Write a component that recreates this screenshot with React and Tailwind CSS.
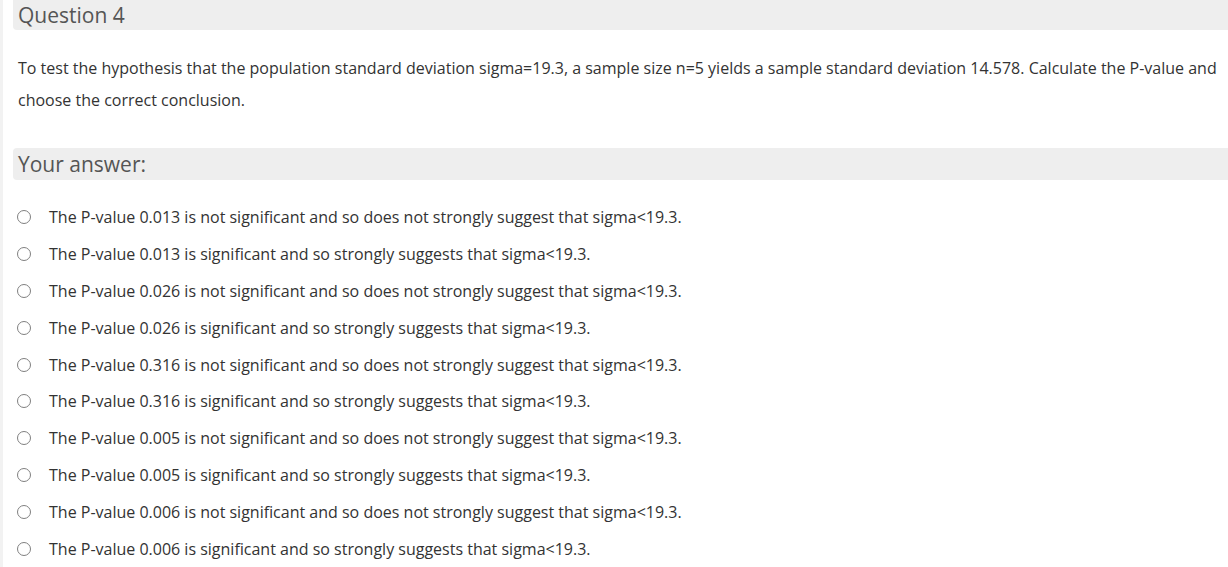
import React from 'react';

const options = [
    'The P-value 0.013 is not significant and so does not strongly suggest that sigma<19.3.',
    'The P-value 0.013 is significant and so strongly suggests that sigma<19.3.',
    'The P-value 0.026 is not significant and so does not strongly suggest that sigma<19.3.',
    'The P-value 0.026 is significant and so strongly suggests that sigma<19.3.',
    'The P-value 0.316 is not significant and so does not strongly suggest that sigma<19.3.',
    'The P-value 0.316 is significant and so strongly suggests that sigma<19.3.',
    'The P-value 0.005 is not significant and so does not strongly suggest that sigma<19.3.',
    'The P-value 0.005 is significant and so strongly suggests that sigma<19.3.',
    'The P-value 0.006 is not significant and so does not strongly suggest that sigma<19.3.',
    'The P-value 0.006 is significant and so strongly suggests that sigma<19.3.',
];

const App = () => {
    return (
        <div className="min-h-[567px] bg-white border-l-[3px] border-[#f2f2f2] pl-[10px] font-['Open_Sans',sans-serif] text-[#333]">
            {/* Question header */}
            <div className="h-[30px] bg-[#eeeeee] rounded-bl-[4px] pl-[5px] flex items-center">
                <h2 className="text-[21px] leading-none text-[#555] font-normal">Question 4</h2>
            </div>

            <p className="mt-[22px] pl-[5px] pr-[8px] text-[16px] leading-[32px] text-[#333]">
                To test the hypothesis that the population standard deviation sigma=19.3, a sample size n=5 yields a sample standard deviation 14.578. Calculate the P-value and choose the correct conclusion.
            </p>

            <div className="mt-[32px] h-[32px] bg-[#eeeeee] rounded-l-[4px] pl-[5px] flex items-center">
                <span className="text-[21px] leading-none text-[#555]">Your answer:</span>
            </div>

            <div className="mt-[19px]">
                {options.map((opt, i) => (
                    <label key={i} className="h-[36.8px] flex items-center cursor-pointer">
                        <span className="ml-[4px] w-[14px] h-[14px] rounded-full border border-[#808080] bg-white shrink-0"></span>
                        <span className="ml-[18px] text-[16px] text-[#333]">{opt}</span>
                    </label>
                ))}
            </div>
        </div>
    );
};

export default App;
